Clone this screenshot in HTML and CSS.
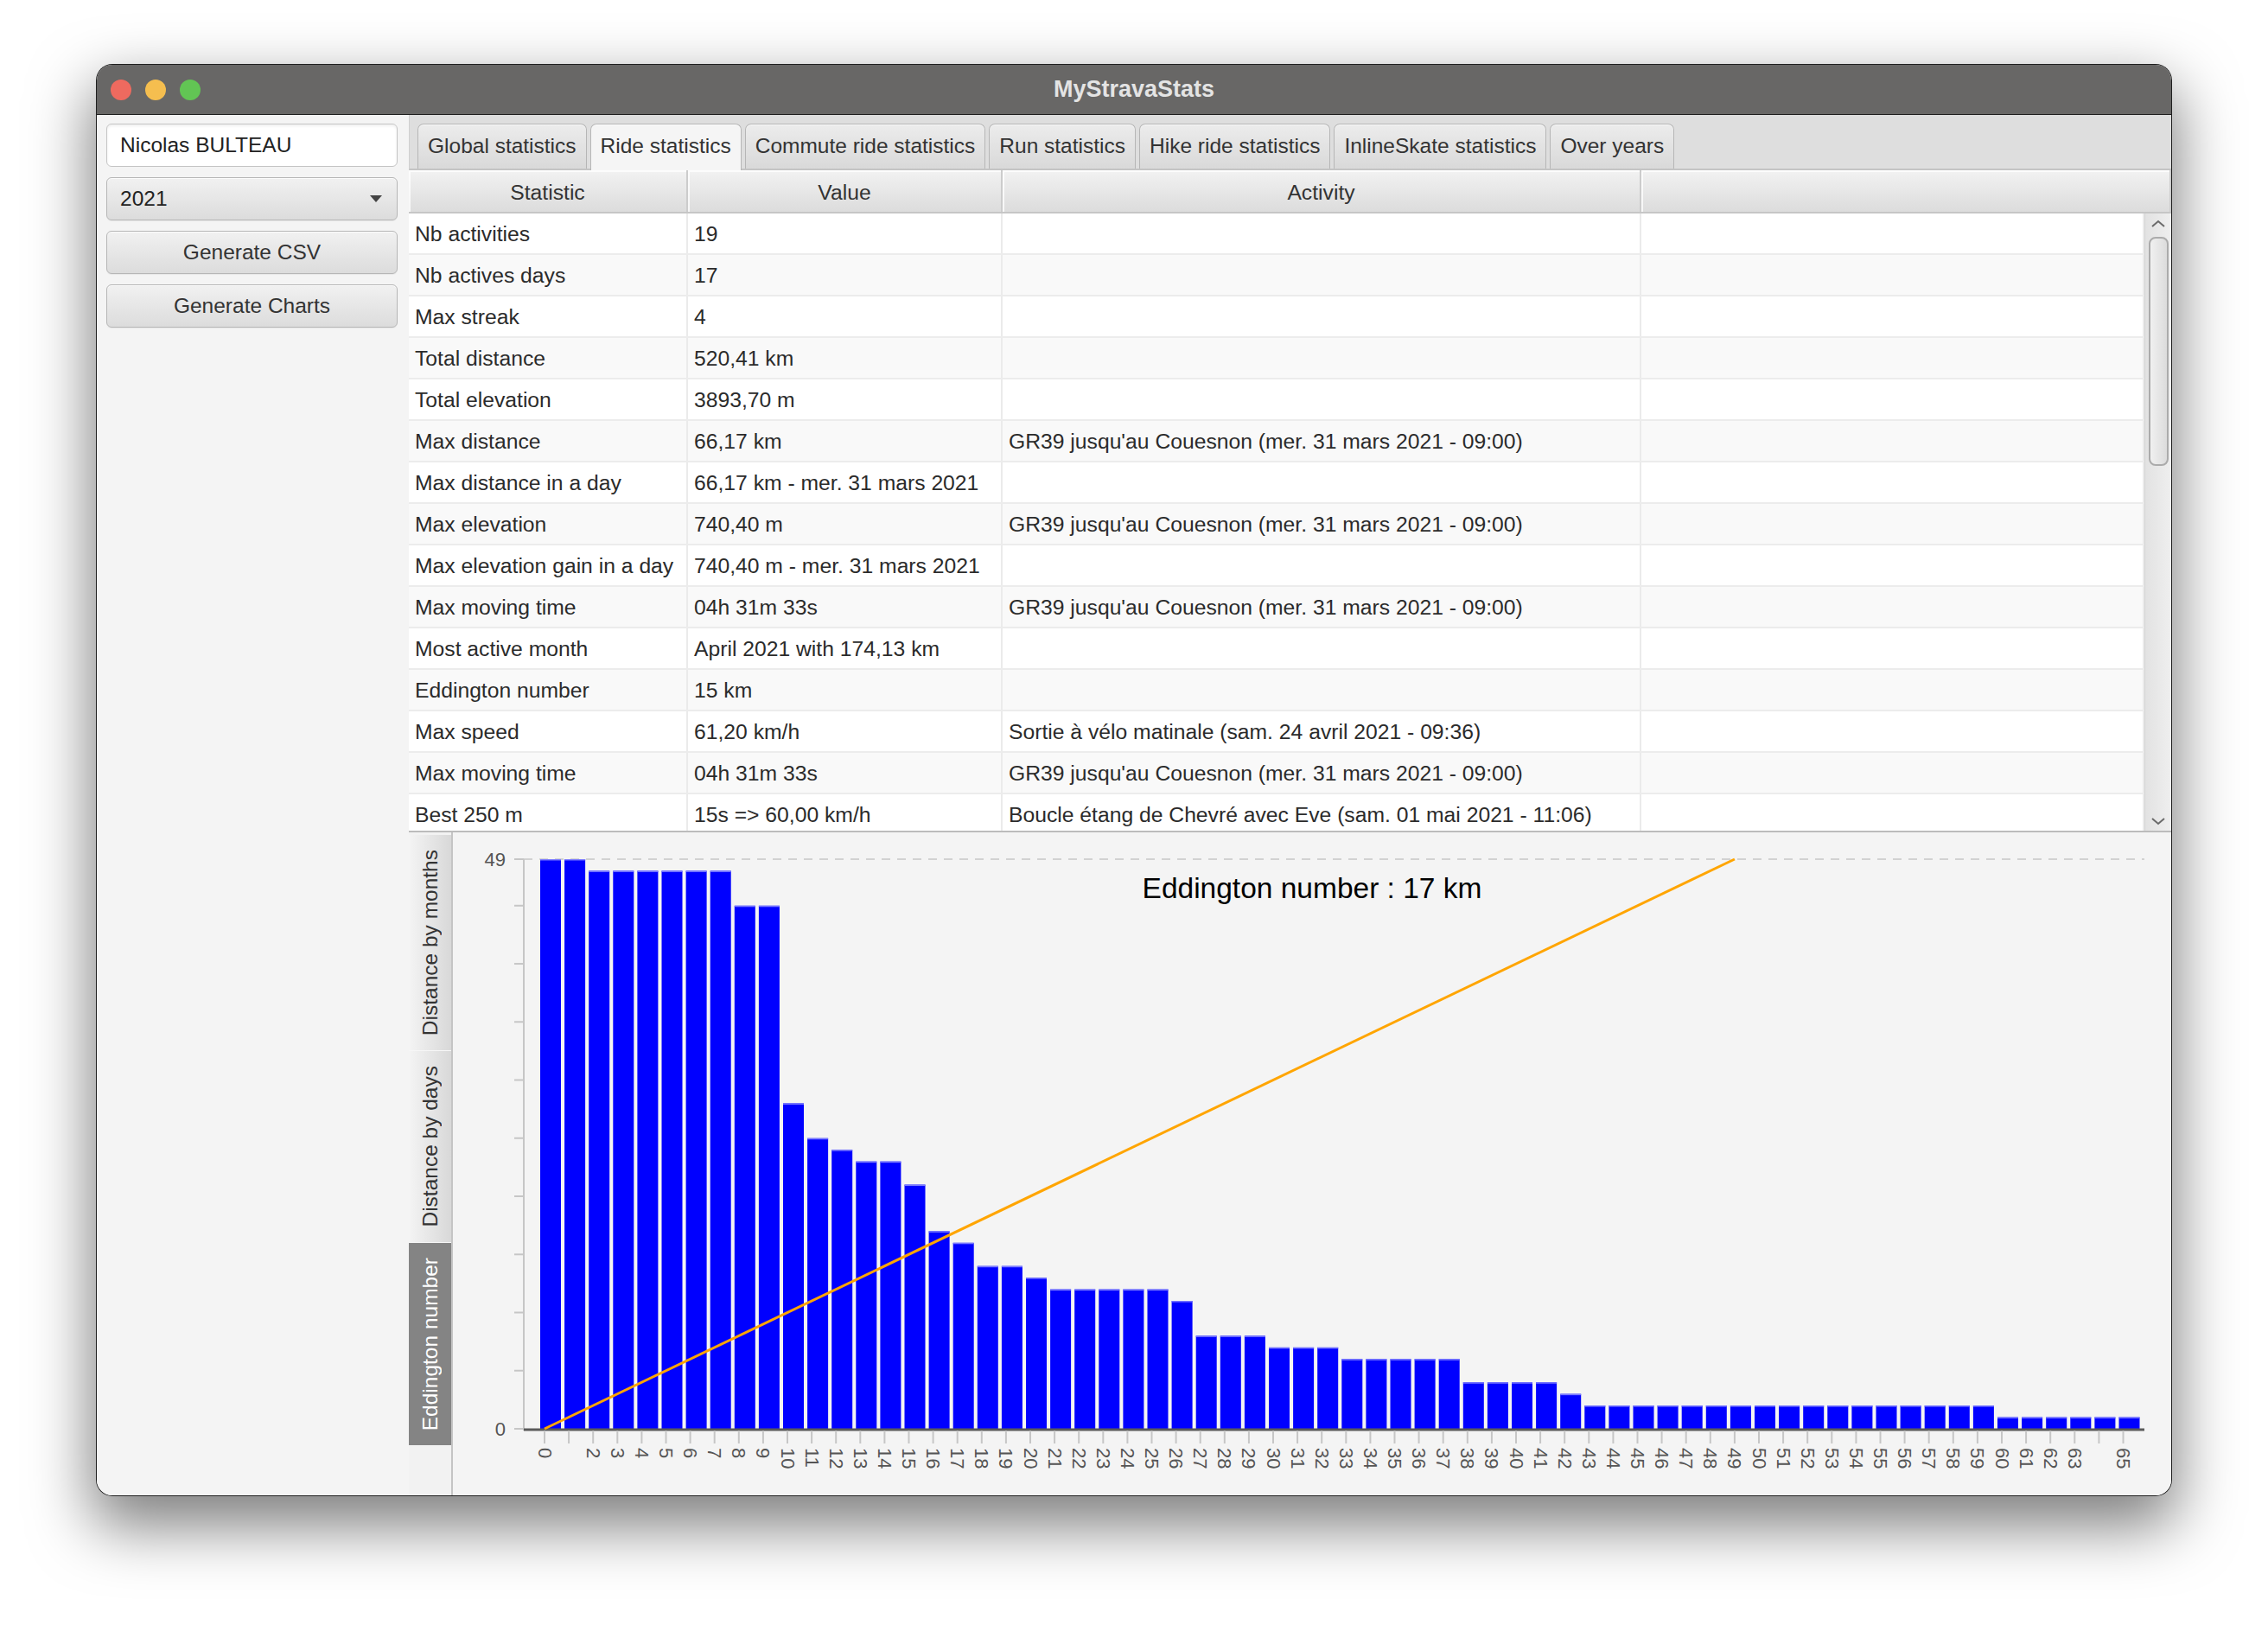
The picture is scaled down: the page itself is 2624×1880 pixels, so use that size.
FILE: index.html
```html
<!DOCTYPE html>
<html lang="fr">
<head>
<meta charset="utf-8">
<title>MyStravaStats</title>
<link rel="stylesheet" href="styles.css">
</head>
<body>
<div class="window">
  <header class="titlebar">
    <div class="lights">
      <span class="light red"></span><span class="light yellow"></span><span class="light green"></span>
    </div>
    <div class="title">MyStravaStats</div>
    <div></div>
  </header>
  <div class="content">
    <aside class="sidebar">
      <div class="textfield">Nicolas BULTEAU</div>
      <div class="combo"><span>2021</span><span class="arrow"></span></div>
      <div class="button">Generate CSV</div>
      <div class="button">Generate Charts</div>
    </aside>
    <main class="main">
      <nav class="tabs">
        <div class="tab">Global statistics</div>
        <div class="tab active">Ride statistics</div>
        <div class="tab">Commute ride statistics</div>
        <div class="tab">Run statistics</div>
        <div class="tab">Hike ride statistics</div>
        <div class="tab">InlineSkate statistics</div>
        <div class="tab">Over years</div>
      </nav>
      <section class="table">
        <div class="thead">
          <div class="th">Statistic</div>
          <div class="th">Value</div>
          <div class="th">Activity</div>
          <div class="th"></div>
        </div>
        <div class="tbody-wrap">
          <div class="rows">
            <div class="row"><div>Nb activities</div><div>19</div><div></div><div></div></div>
            <div class="row"><div>Nb actives days</div><div>17</div><div></div><div></div></div>
            <div class="row"><div>Max streak</div><div>4</div><div></div><div></div></div>
            <div class="row"><div>Total distance</div><div>520,41 km</div><div></div><div></div></div>
            <div class="row"><div>Total elevation</div><div>3893,70 m</div><div></div><div></div></div>
            <div class="row"><div>Max distance</div><div>66,17 km</div><div>GR39 jusqu'au Couesnon (mer. 31 mars 2021 - 09:00)</div><div></div></div>
            <div class="row"><div>Max distance in a day</div><div>66,17 km - mer. 31 mars 2021</div><div></div><div></div></div>
            <div class="row"><div>Max elevation</div><div>740,40 m</div><div>GR39 jusqu'au Couesnon (mer. 31 mars 2021 - 09:00)</div><div></div></div>
            <div class="row"><div>Max elevation gain in a day</div><div>740,40 m - mer. 31 mars 2021</div><div></div><div></div></div>
            <div class="row"><div>Max moving time</div><div>04h 31m 33s</div><div>GR39 jusqu'au Couesnon (mer. 31 mars 2021 - 09:00)</div><div></div></div>
            <div class="row"><div>Most active month</div><div>April 2021 with 174,13 km</div><div></div><div></div></div>
            <div class="row"><div>Eddington number</div><div>15 km</div><div></div><div></div></div>
            <div class="row"><div>Max speed</div><div>61,20 km/h</div><div>Sortie à vélo matinale (sam. 24 avril 2021 - 09:36)</div><div></div></div>
            <div class="row"><div>Max moving time</div><div>04h 31m 33s</div><div>GR39 jusqu'au Couesnon (mer. 31 mars 2021 - 09:00)</div><div></div></div>
            <div class="row"><div>Best 250 m</div><div>15s =&gt; 60,00 km/h</div><div>Boucle étang de Chevré avec Eve (sam. 01 mai 2021 - 11:06)</div><div></div></div>
          </div>
          <div class="vscroll">
            <svg class="chev" width="16" height="10" viewBox="0 0 16 10"><polyline points="1,8 8,2 15,8" fill="none" stroke="#6a6a6a" stroke-width="2"/></svg>
            <div class="thumb"></div>
            <div class="spacer"></div>
            <svg class="chev" width="16" height="10" viewBox="0 0 16 10"><polyline points="1,2 8,8 15,2" fill="none" stroke="#6a6a6a" stroke-width="2"/></svg>
          </div>
        </div>
      </section>
      <section class="charts">
        <div class="vtabs">
          <div class="vtab"><span>Distance by months</span></div>
          <div class="vtab"><span>Distance by days</span></div>
          <div class="vtab active"><span>Eddington number</span></div>
        </div>
        <div class="chart">
          <svg id="chart" width="1988" height="767" viewBox="0 0 1988 767"></svg>
        </div>
      </section>
    </main>
  </div>
</div>
<script src="chart.js"></script>
</body>
</html>
```

FILE: styles.css
```css
html, body {
  margin: 0;
  padding: 0;
}
body {
  width: 2624px;
  height: 1880px;
  overflow: hidden;
  background: #ffffff;
  box-sizing: border-box;
  padding: 75px 0 0 112px;
  font-family: "Liberation Sans", Arial, sans-serif;
  color: #333;
}
.window {
  width: 2400px;
  height: 1655px;
  display: flex;
  flex-direction: column;
  border-radius: 18px;
  overflow: hidden;
  background: #f4f4f4;
  box-shadow: 0 0 0 1px #1f1f1f, 0 30px 70px 6px rgba(0, 0, 0, 0.5);
}
.titlebar {
  height: 57px;
  flex: none;
  background: #686766;
  border-bottom: 1px solid #1e1e1e;
  display: grid;
  grid-template-columns: 1fr auto 1fr;
  align-items: center;
}
.lights {
  display: flex;
  gap: 16px;
  padding-left: 16px;
}
.light {
  width: 24px;
  height: 24px;
  border-radius: 50%;
}
.red { background: #ee6a5f; }
.yellow { background: #f5be4f; }
.green { background: #62c554; }
.title {
  color: #e4e4e4;
  font-weight: bold;
  font-size: 27px;
}
.content {
  flex: 1;
  display: flex;
  min-height: 0;
}
.sidebar {
  width: 361px;
  flex: none;
  box-sizing: border-box;
  padding: 10px 13px 0 11px;
  display: flex;
  flex-direction: column;
  gap: 12px;
  background: #f4f4f4;
  font-size: 24.5px;
}
.textfield, .combo, .button {
  height: 50px;
  box-sizing: border-box;
  border-radius: 6px;
  display: flex;
  align-items: center;
}
.textfield {
  background: #ffffff;
  border: 1px solid #c4c4c4;
  box-shadow: inset 0 2px 3px rgba(0, 0, 0, 0.06);
  padding-left: 15px;
  color: #222;
}
.combo, .button {
  background: linear-gradient(#f1f1f1, #dcdcdc);
  border: 1px solid #b6b6b6;
  box-shadow: inset 0 1px 0 rgba(255, 255, 255, 0.8), 0 1px 1px rgba(0, 0, 0, 0.05);
}
.combo {
  justify-content: space-between;
  padding: 0 17px 0 15px;
  color: #222;
}
.arrow {
  width: 0;
  height: 0;
  border-left: 7px solid transparent;
  border-right: 7px solid transparent;
  border-top: 8px solid #444;
}
.button {
  justify-content: center;
  color: #333;
}
.main {
  flex: 1;
  min-width: 0;
  display: flex;
  flex-direction: column;
}
.tabs {
  height: 64px;
  flex: none;
  box-sizing: border-box;
  background: #dedede;
  border-bottom: 2px solid #c4c4c4;
  border-left: 1px solid #cfcfcf;
  padding: 10px 0 0 9px;
  display: flex;
  align-items: flex-start;
  gap: 4px;
  font-size: 24.5px;
}
.tab {
  height: 52px;
  box-sizing: border-box;
  padding: 0 11px;
  border: 1px solid #b6b6b6;
  border-bottom: none;
  border-radius: 7px 7px 0 0;
  background: linear-gradient(#ececec, #d9d9d9);
  box-shadow: inset 0 1px 0 rgba(255, 255, 255, 0.7);
  display: flex;
  align-items: center;
  padding-bottom: 2px;
  white-space: nowrap;
  color: #333;
}
.tab.active {
  height: 54px;
  margin-bottom: -2px;
  padding-bottom: 4px;
  background: #f5f5f5;
}
.table {
  flex: none;
  display: flex;
  flex-direction: column;
  font-size: 24.7px;
}
.thead {
  height: 50px;
  box-sizing: border-box;
  display: grid;
  grid-template-columns: 323px 364px 739px 1fr;
  background: linear-gradient(#f2f2f2, #dcdcdc);
  border-bottom: 2px solid #c6c6c6;
}
.th {
  display: flex;
  align-items: center;
  justify-content: center;
  padding-top: 3px;
  border-right: 2px solid #cccccc;
  box-shadow: inset 2px 2px 0 rgba(255, 255, 255, 0.75);
  color: #333;
}
.tbody-wrap {
  height: 716px;
  box-sizing: border-box;
  border-bottom: 2px solid #bcbcbc;
  display: flex;
  overflow: hidden;
}
.rows {
  flex: 1;
  min-width: 0;
  overflow: hidden;
}
.row {
  height: 48px;
  box-sizing: border-box;
  display: grid;
  grid-template-columns: 323px 364px 739px 1fr;
  background: #ffffff;
  border-bottom: 2px solid #ececec;
}
.row:nth-child(even) {
  background: #f9f9f9;
}
.row > div {
  display: flex;
  align-items: center;
  padding-left: 7px;
  padding-top: 1px;
  border-right: 2px solid #ebebeb;
  white-space: nowrap;
  overflow: hidden;
  color: #2b2b2b;
}
.vscroll {
  width: 31px;
  flex: none;
  box-sizing: border-box;
  background: linear-gradient(90deg, #e2e2e2, #efefef);
  border-left: 1px solid #d4d4d4;
  display: flex;
  flex-direction: column;
  align-items: center;
  padding: 7px 0 6px;
}
.chev {
  flex: none;
}
.thumb {
  margin-top: 10px;
  width: 23px;
  height: 265px;
  box-sizing: border-box;
  border: 2px solid #ababab;
  border-radius: 8px;
  background: linear-gradient(90deg, #f0f0f0, #dcdcdc);
}
.spacer {
  flex: 1;
}
.charts {
  flex: 1;
  min-height: 0;
  display: flex;
  background: #f4f4f4;
}
.vtabs {
  width: 51px;
  flex: none;
  box-sizing: border-box;
  padding-top: 3px;
  border-right: 2px solid #c4c4c4;
  background: #f2f2f2;
  display: flex;
  flex-direction: column;
  font-size: 24.5px;
}
.vtab {
  padding: 17px 0;
  display: flex;
  justify-content: center;
  background: linear-gradient(90deg, #f4f4f4, #d8d8d8);
  border-bottom: 1px solid #f6f6f6;
  color: #333;
}
.vtab.active {
  background: #848484;
  color: #ffffff;
}
.vtab span {
  writing-mode: vertical-rl;
  transform: rotate(180deg);
  white-space: nowrap;
}
.chart {
  flex: 1;
  min-width: 0;
}
.chart svg {
  display: block;
}
.axis-label {
  font-family: "Liberation Sans", Arial, sans-serif;
  font-size: 22px;
  fill: #555555;
}
.chart-title {
  font-family: "Liberation Sans", Arial, sans-serif;
  font-size: 33.5px;
  fill: #000000;
}
```

FILE: chart.js
```javascript
(function () {
  var NS = 'http://www.w3.org/2000/svg';
  var svg = document.getElementById('chart');
  var values = [49, 49, 48, 48, 48, 48, 48, 48, 45, 45, 28, 25, 24, 23, 23, 21, 17, 16, 14, 14, 13,
    12, 12, 12, 12, 12, 11, 8, 8, 8, 7, 7, 7, 6, 6, 6, 6, 6, 4, 4, 4, 4, 3];
  var i;
  for (i = 43; i <= 59; i++) values.push(2);
  for (i = 60; i <= 65; i++) values.push(1);

  var base = 690, top = 31, unit = (base - top) / 49;
  var x0 = 106, pitch = 28.1, axisX = 82, right = 1957;

  function el(name, attrs, text) {
    var e = document.createElementNS(NS, name);
    for (var k in attrs) e.setAttribute(k, attrs[k]);
    if (text !== undefined) e.textContent = text;
    svg.appendChild(e);
    return e;
  }

  el('line', { x1: axisX, y1: top, x2: right, y2: top, stroke: '#d2d2d2', 'stroke-width': 2, 'stroke-dasharray': '10 8' });
  el('line', { x1: axisX, y1: top, x2: axisX, y2: base + 2, stroke: '#c6c6c6', 'stroke-width': 2 });
  var yt = [0, 5, 10, 15, 20, 25, 30, 35, 40, 45, 49];
  yt.forEach(function (v) {
    var y = base - v * unit;
    el('line', { x1: 71, y1: y, x2: axisX, y2: y, stroke: '#c6c6c6', 'stroke-width': 2 });
  });
  el('text', { x: 61, y: top, 'text-anchor': 'end', 'dominant-baseline': 'central', 'class': 'axis-label' }, '49');
  el('text', { x: 61, y: base, 'text-anchor': 'end', 'dominant-baseline': 'central', 'class': 'axis-label' }, '0');

  values.forEach(function (v, k) {
    var x = x0 + k * pitch - 5;
    var y = base - v * unit;
    el('rect', { x: x, y: y, width: 24, height: base - y, fill: '#0000ff' });
    el('rect', { x: x, y: y, width: 24, height: 1.5, fill: '#7a7aff' });
  });

  el('line', { x1: axisX, y1: base + 1, x2: right, y2: base + 1, stroke: '#5a5a5a', 'stroke-width': 3 });

  values.forEach(function (v, k) {
    var x = x0 + k * pitch;
    el('line', { x1: x, y1: base + 2, x2: x, y2: base + 17, stroke: '#c6c6c6', 'stroke-width': 2 });
    if (k === 1 || k === 64) return;
    el('text', { x: x, y: base + 22, 'dominant-baseline': 'central', 'class': 'axis-label',
      transform: 'rotate(90 ' + x + ' ' + (base + 22) + ')' }, String(k));
  });

  el('line', { x1: x0, y1: base, x2: x0 + 49 * pitch, y2: top, stroke: '#ffa500', 'stroke-width': 3 });

  el('text', { x: 994, y: 76, 'text-anchor': 'middle', 'class': 'chart-title' }, 'Eddington number : 17 km');
})();
```
